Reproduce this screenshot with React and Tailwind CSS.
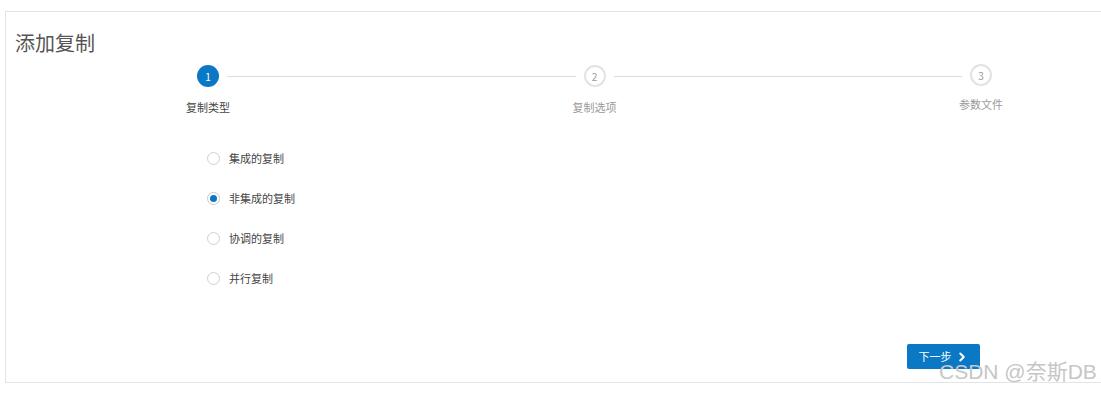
import React from 'react'
import { ChevronRight } from 'lucide-react'

const FONT = { fontFamily: '"Noto Sans CJK SC", "Noto Sans", sans-serif' }

const steps = ['复制类型', '复制选项', '参数文件']
const options = ['集成的复制', '非集成的复制', '协调的复制', '并行复制']

function StepCircle({ n, active }) {
  return active ? (
    <div className="w-[22px] h-[22px] rounded-full bg-[#0b78c6] text-white text-[10px] flex items-center justify-center shrink-0">
      {n}
    </div>
  ) : (
    <div className="w-[22px] h-[22px] rounded-full border-2 border-[#e3e3e3] bg-white text-[#9a9a9a] text-[10px] flex items-center justify-center shrink-0">
      {n}
    </div>
  )
}

export default function App() {
  const selected = 1
  return (
    <div className="w-[1101px] h-[393px] bg-white pt-[11px] pl-[5px] overflow-hidden relative" style={FONT}>
      <div className="w-[1110px] h-[372px] border border-[#e4e4e4] flex flex-col">
        {/* Title */}
        <h1 className="text-[20px] leading-[24px] text-[#555] pl-[9px] pt-[19px]">添加复制</h1>

        {/* Stepper */}
        <div className="flex items-center pl-[191px] w-[986px] mt-[10px]">
          <StepCircle n={1} active />
          <div className="flex-1 h-px bg-[#dcdcdc] mx-[8px]" />
          <StepCircle n={2} />
          <div className="flex-1 h-px bg-[#dcdcdc] mx-[8px]" />
          <div className="-mt-[2px]">
            <StepCircle n={3} />
          </div>
        </div>
        <div className="flex pl-[162px] w-[1015px] justify-between mt-[13px] text-[11px] leading-[14px]">
          {steps.map((s, i) => (
            <div
              key={s}
              className={`w-[80px] text-center ${i === 0 ? 'text-[#444]' : 'text-[#9a9a9a]'} ${i === 2 ? '-mt-[3px]' : ''}`}
            >
              {s}
            </div>
          ))}
        </div>

        {/* Options */}
        <div className="flex flex-col gap-[26px] pl-[201px] mt-[37px]">
          {options.map((o, i) => (
            <label key={o} className="flex items-center gap-[9px] h-[14px] text-[11px] text-[#444]">
              {i === selected ? (
                <span className="w-[13px] h-[13px] rounded-full border border-[#c8c8c8] bg-white flex items-center justify-center">
                  <span className="w-[7px] h-[7px] rounded-full bg-[#0b78c6]" />
                </span>
              ) : (
                <span className="w-[13px] h-[13px] rounded-full border border-[#cfcfcf] bg-white" />
              )}
              {o}
            </label>
          ))}
        </div>

        {/* Footer */}
        <div className="mt-auto mb-[13px] pl-[901px]">
          <button className="w-[73px] h-[25px] bg-[#0b78c6] rounded-[2px] text-white text-[11px] flex items-center justify-center gap-[3px]">
            下一步
            <ChevronRight size={14} strokeWidth={3.5} />
          </button>
        </div>
      </div>

      {/* watermark */}
      <div
        className="absolute left-[939px] top-[359px] text-[21px] leading-[26px] text-[#c6c6c6] whitespace-nowrap"
        style={{ fontFamily: '"Liberation Sans", "Noto Sans CJK SC", sans-serif' }}
      >
        CSDN @奈斯DB
      </div>
    </div>
  )
}
